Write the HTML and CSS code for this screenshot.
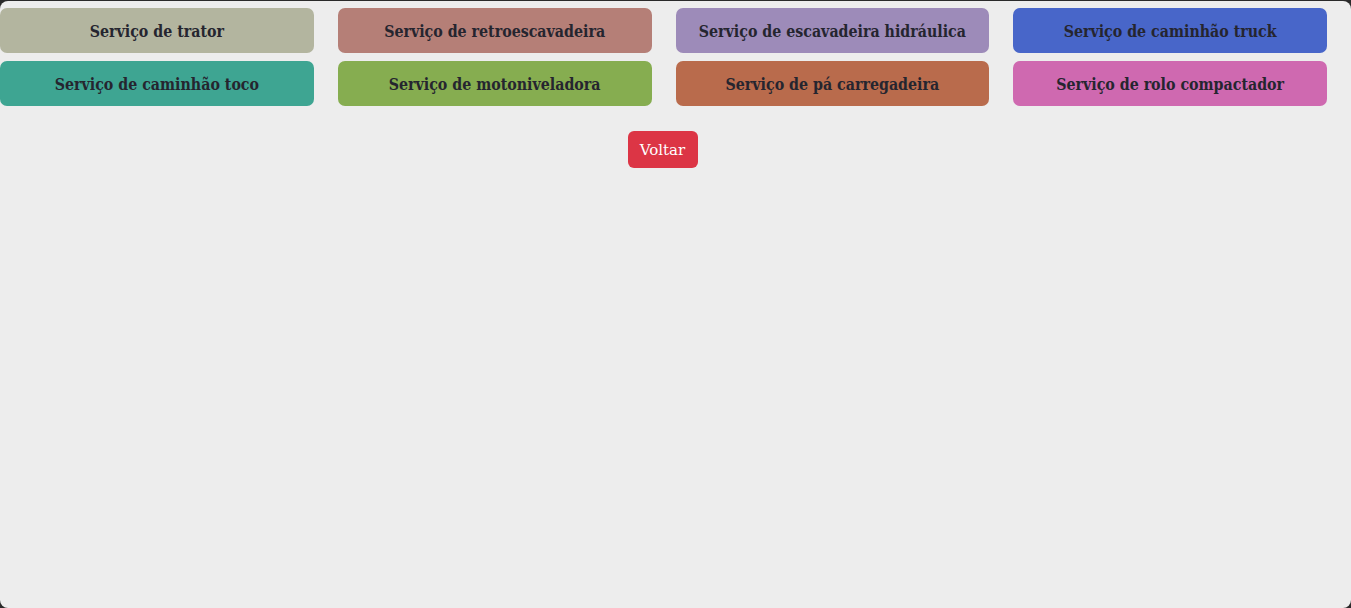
FILE: index.html
```html
<!DOCTYPE html>
<html lang="pt-BR">
<head>
<meta charset="utf-8">
<title>Serviços</title>
<link rel="stylesheet" href="styles.css">
</head>
<body>
<main class="page">
  <div class="services">
    <button class="service s-trator">Serviço de trator</button>
    <button class="service s-retro">Serviço de retroescavadeira</button>
    <button class="service s-escav">Serviço de escavadeira hidráulica</button>
    <button class="service s-truck">Serviço de caminhão truck</button>
    <button class="service s-toco">Serviço de caminhão toco</button>
    <button class="service s-moto">Serviço de motoniveladora</button>
    <button class="service s-pa">Serviço de pá carregadeira</button>
    <button class="service s-rolo">Serviço de rolo compactador</button>
  </div>
  <div class="actions">
    <button class="back">Voltar</button>
  </div>
</main>
</body>
</html>
```
FILE: styles.css
```css
html {
  background: #2a2a2a;
  height: 100%;
}
body {
  margin: 1px 0 0 0;
  min-height: 607px;
  background: #ededed;
  border-radius: 8px;
  font-family: "DejaVu Serif", serif;
}
.page {
  padding: 7px 24px 0 0;
}
.services {
  display: grid;
  grid-template-columns: repeat(4, 1fr);
  column-gap: 24px;
  row-gap: 8px;
}
.service {
  height: 45px;
  padding: 2px 6px 0;
  border: none;
  border-radius: 7px;
  font-family: "DejaVu Serif Condensed", "DejaVu Serif", serif;
  font-stretch: condensed;
  font-size: 15.8px;
  font-weight: 700;
  color: #25252f;
  cursor: pointer;
}
.s-trator { background: #b3b59f; }
.s-retro { background: #b57f77; }
.s-escav { background: #9d8bb9; }
.s-truck { background: #4866c9; }
.s-toco { background: #3ea592; }
.s-moto { background: #86ad50; }
.s-pa { background: #b96b4c; }
.s-rolo { background: #cf69b0; }
.actions {
  display: flex;
  justify-content: center;
  margin-top: 25px;
}
.back {
  width: 70px;
  height: 37px;
  margin-right: 2px;
  padding-top: 1px;
  border: none;
  border-radius: 6px;
  background: #dc3545;
  color: #fff;
  font-family: "DejaVu Serif", serif;
  font-size: 15px;
}
```
